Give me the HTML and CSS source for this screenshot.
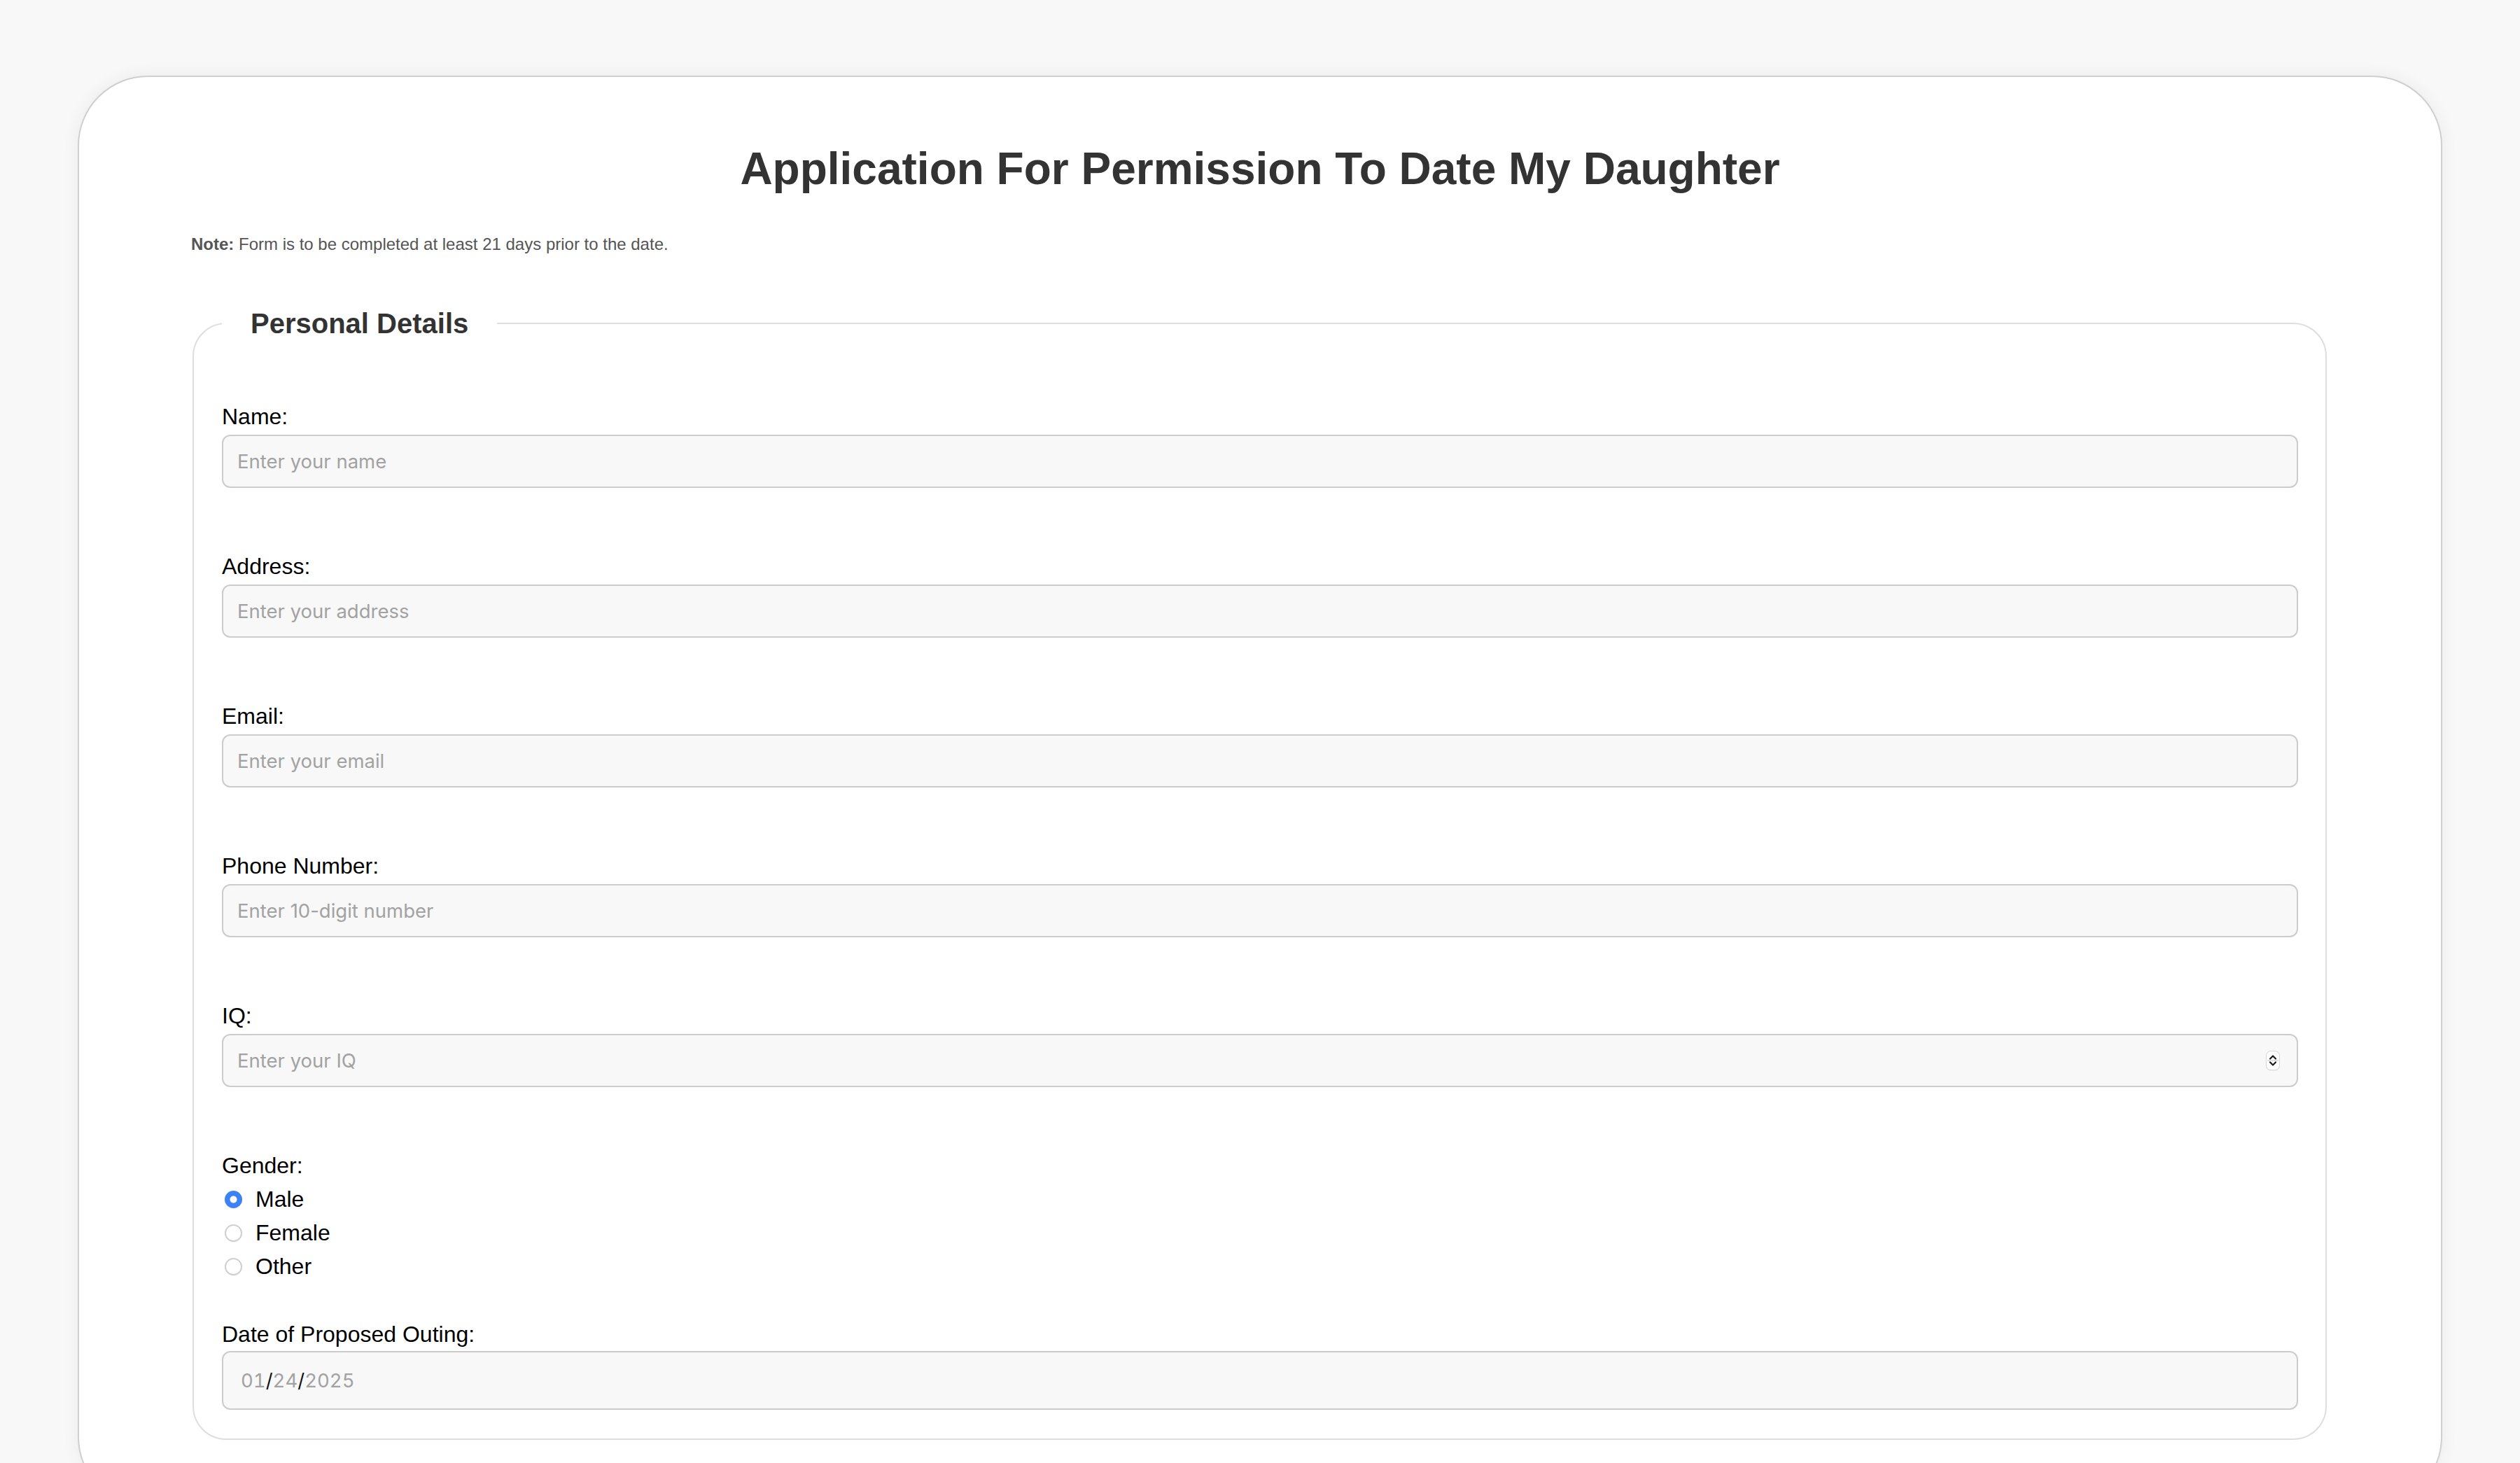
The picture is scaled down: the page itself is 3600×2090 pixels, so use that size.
FILE: index.html
```html
<!DOCTYPE html>
<html lang="en">
<head>
<meta charset="utf-8">
<title>Application For Permission To Date My Daughter</title>
<link rel="stylesheet" href="styles.css">
</head>
<body>
<main class="card">
  <h1 class="title">Application For Permission To Date My Daughter</h1>
  <p class="note"><strong>Note:</strong> Form is to be completed at least 21 days prior to the date.</p>
  <form class="form">
    <fieldset class="section">
      <legend class="section-title">Personal Details</legend>

      <div class="field">
        <label class="field-label" for="name">Name:</label>
        <input class="text-input" id="name" type="text" placeholder="Enter your name">
      </div>

      <div class="field">
        <label class="field-label" for="address">Address:</label>
        <input class="text-input" id="address" type="text" placeholder="Enter your address">
      </div>

      <div class="field">
        <label class="field-label" for="email">Email:</label>
        <input class="text-input" id="email" type="email" placeholder="Enter your email">
      </div>

      <div class="field">
        <label class="field-label" for="phone">Phone Number:</label>
        <input class="text-input" id="phone" type="tel" placeholder="Enter 10-digit number">
      </div>

      <div class="field">
        <label class="field-label" for="iq">IQ:</label>
        <div class="number-wrap">
          <input class="text-input number-input" id="iq" type="number" placeholder="Enter your IQ">
          <span class="spinner" aria-hidden="true">
            <svg width="18" height="26" viewBox="0 0 18 26">
              <path d="M5 10.5 L9 6.5 L13 10.5" fill="none" stroke="#1a1a1a" stroke-width="2.2" stroke-linecap="round" stroke-linejoin="round"/>
              <line x1="1" y1="13" x2="17" y2="13" stroke="#d6d6d6" stroke-width="1.5"/>
              <path d="M5 15.5 L9 19.5 L13 15.5" fill="none" stroke="#1a1a1a" stroke-width="2.2" stroke-linecap="round" stroke-linejoin="round"/>
            </svg>
          </span>
        </div>
      </div>

      <div class="field field-gender">
        <span class="field-label">Gender:</span>
        <div class="radio-list">
          <label class="radio-option"><input class="radio" type="radio" name="gender" value="male" checked><span>Male</span></label>
          <label class="radio-option"><input class="radio" type="radio" name="gender" value="female"><span>Female</span></label>
          <label class="radio-option"><input class="radio" type="radio" name="gender" value="other"><span>Other</span></label>
        </div>
      </div>

      <div class="field field-date">
        <label class="field-label date-label" for="outing">Date of Proposed Outing:</label>
        <div class="date-input" id="outing" role="textbox" aria-label="Date of Proposed Outing">
          <span class="date-part">01</span><span class="date-sep">/</span><span class="date-part">24</span><span class="date-sep">/</span><span class="date-part">2025</span>
        </div>
      </div>
    </fieldset>
  </form>
</main>
</body>
</html>
```

FILE: styles.css
```css
html, body {
  margin: 0;
  padding: 0;
}

body {
  background: #f8f8f8;
  font-family: "Liberation Sans", Arial, sans-serif;
  color: #000;
}

.card {
  margin: 108px 111px 0;
  padding: 94px 160px 94px;
  background: #fff;
  border: 2px solid #cfcfcf;
  border-radius: 100px;
  box-shadow: 0 0 24px rgba(0, 0, 0, 0.06);
}

.title {
  margin: 0 0 57px;
  font-size: 64px;
  line-height: 74px;
  font-weight: 700;
  color: #333;
  text-align: center;
}

.note {
  margin: 0;
  font-size: 24px;
  line-height: 28px;
  color: #555;
}

.note strong {
  color: #555;
}

.form {
  margin: 0;
}

.section {
  margin: 76px 3px 0 2px;
  padding: 92px 39px 41px 40px;
  border: 2px solid #dedede;
  border-radius: 48px;
  min-width: 0;
}

.section-title {
  padding: 0 41px;
  font-size: 40px;
  line-height: 46px;
  font-weight: 700;
  color: #333;
}

.field + .field {
  margin-top: 94px;
}

.field-label {
  display: block;
  margin-bottom: 7px;
  font-size: 32px;
  line-height: 37px;
  color: #000;
}

.text-input {
  display: block;
  box-sizing: border-box;
  width: 100%;
  height: 76px;
  margin: 0;
  padding: 0 20px;
  border: 2px solid #cccccc;
  border-radius: 12px;
  background: #f8f8f8;
  font-family: Inter, "Noto Sans", sans-serif;
  font-size: 27.5px;
  color: #000;
  outline: none;
}

.text-input::placeholder {
  color: #a2a2a2;
}

.number-wrap {
  position: relative;
}

.number-input {
  -moz-appearance: textfield;
  appearance: textfield;
}

.number-input::-webkit-inner-spin-button,
.number-input::-webkit-outer-spin-button {
  -webkit-appearance: none;
  margin: 0;
}

.spinner {
  position: absolute;
  right: 27px;
  top: 50%;
  transform: translateY(-50%);
  width: 18px;
  height: 26px;
  background: #fff;
  border-radius: 6px;
  box-shadow: 0 0 0 1px #d8d8d8, 0 1px 2px rgba(0, 0, 0, 0.14);
  display: flex;
}

.field-gender .field-label {
  margin-bottom: 5px;
}

.radio-list {
  display: flex;
  flex-direction: column;
}

.radio-option {
  display: flex;
  align-items: center;
  gap: 19px;
  height: 48px;
  font-size: 32px;
  line-height: 37px;
  color: #000;
}

.radio {
  -webkit-appearance: none;
  appearance: none;
  box-sizing: border-box;
  width: 25px;
  height: 25px;
  margin: 0 0 0 4px;
  border: 2px solid #d0d0d0;
  border-radius: 50%;
  background: #fff;
  box-shadow: 0 1px 1px rgba(0, 0, 0, 0.06);
}

.radio:checked {
  border: none;
  background: radial-gradient(circle, #fff 0 4.5px, #3b82f6 5.5px);
}

.field-gender + .field-date {
  margin-top: 55px;
}

.date-label {
  margin-bottom: 5px;
}

.date-input {
  box-sizing: border-box;
  display: flex;
  align-items: center;
  height: 84px;
  padding: 0 25px;
  border: 2px solid #cccccc;
  border-radius: 12px;
  background: #f8f8f8;
  font-family: Inter, "Noto Sans", sans-serif;
  font-size: 27.5px;
  font-variant-numeric: tabular-nums;
}

.date-part {
  color: #a2a2a2;
}

.date-sep {
  color: #111;
}
```
